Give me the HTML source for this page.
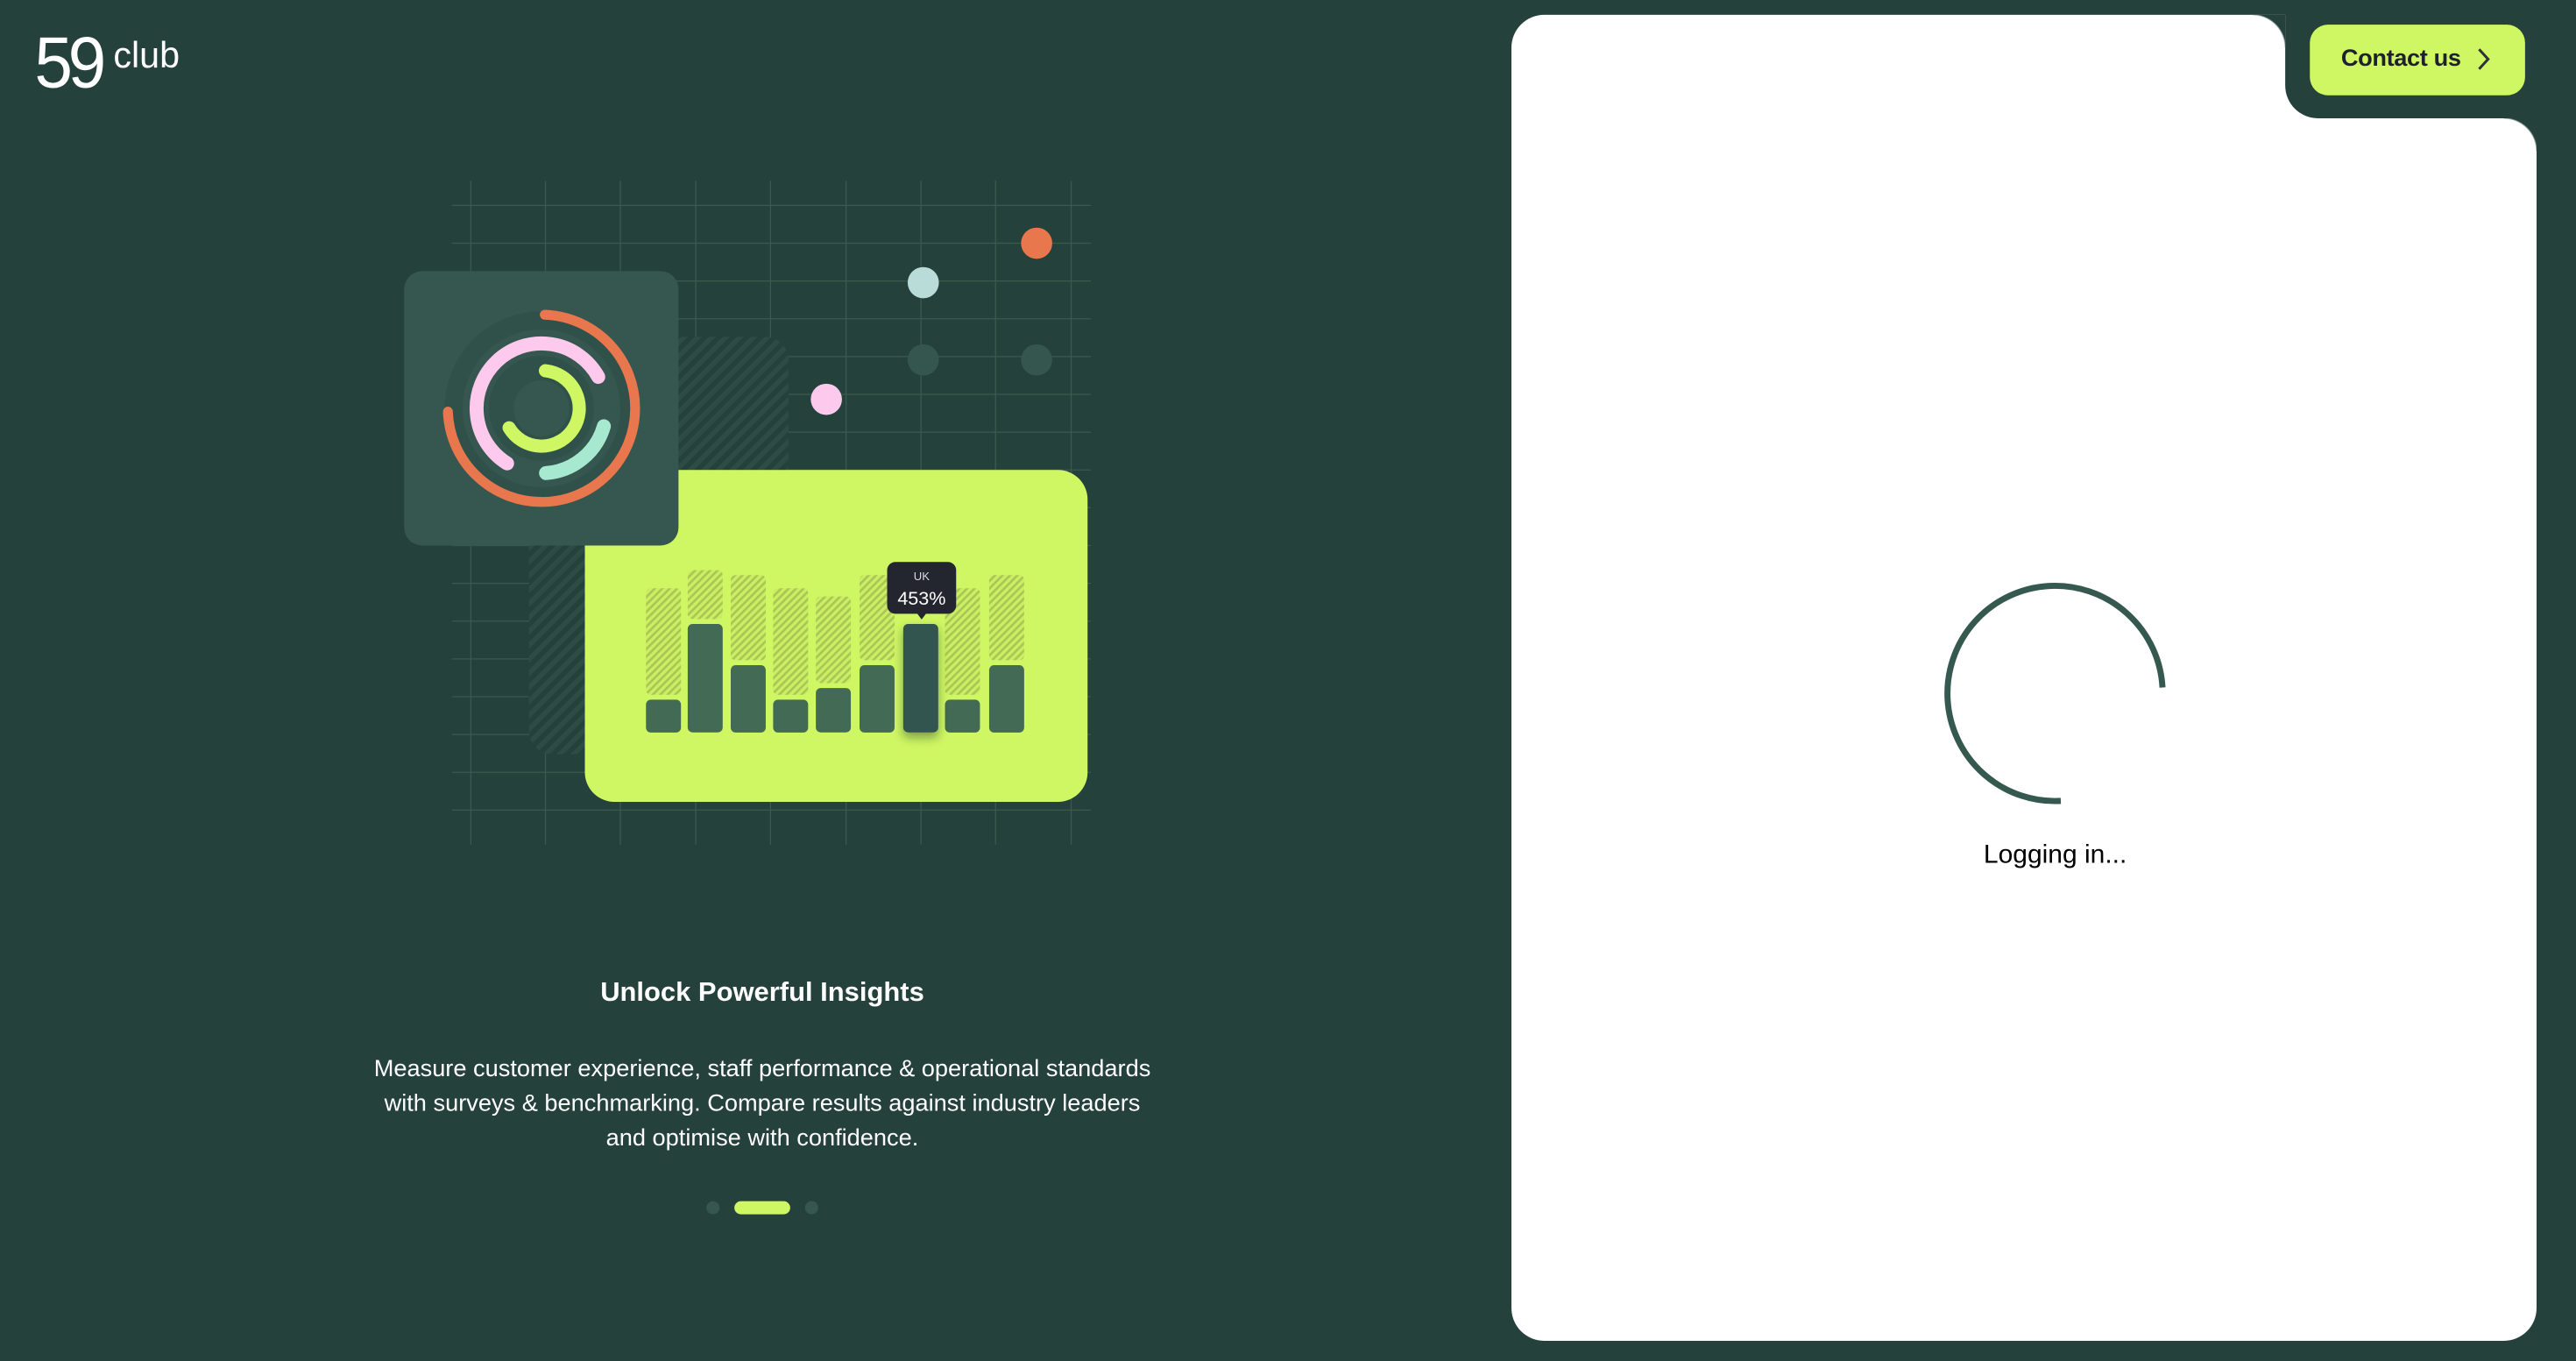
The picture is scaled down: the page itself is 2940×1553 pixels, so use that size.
<!DOCTYPE html>
<html><head><meta charset="utf-8">
<style>
html,body{margin:0;padding:0;width:2940px;height:1552px;overflow:hidden;background:#25413b;}
#s{position:absolute;left:0;top:0;width:1568px;height:828px;transform:scale(1.875);transform-origin:0 0;font-family:"Liberation Sans",sans-serif;}
.a{position:absolute;}
</style></head><body>
<div id="s">
  <!-- logo -->
  <div class="a" style="left:21px;top:17px;color:#fff;font-size:44px;line-height:44px;font-weight:normal;letter-spacing:-3px;transform:scaleX(0.95);transform-origin:0 0;">59</div>
  <div class="a" style="left:69px;top:22px;color:#fff;font-size:22px;line-height:24px;">club</div>

  <!-- illustration -->
  <svg class="a" style="left:0;top:0" width="900" height="560" viewBox="0 0 900 560">
    <defs>
      <pattern id="hd" width="6" height="6" patternUnits="userSpaceOnUse" patternTransform="rotate(45)">
        <rect width="6" height="6" fill="#25413b"/>
        <rect width="3" height="6" fill="#2e4b44"/>
      </pattern>
      <pattern id="hl" width="3.2" height="3.2" patternUnits="userSpaceOnUse" patternTransform="rotate(45)">
        <rect width="3.2" height="3.2" fill="#cbee62"/>
        <rect width="1.4" height="3.2" fill="#a9c656"/>
      </pattern>
      <filter id="sh" x="-50%" y="-50%" width="200%" height="200%"><feDropShadow dx="0" dy="3" stdDeviation="3" flood-color="#1b2f20" flood-opacity="0.45"/></filter>
    </defs>
    <g stroke="#3b5a4e" stroke-width="0.7">
      <line x1="286.6" y1="110" x2="286.6" y2="514"/><line x1="332" y1="110" x2="332" y2="514"/>
      <line x1="377.6" y1="110" x2="377.6" y2="514"/><line x1="423.5" y1="110" x2="423.5" y2="514"/>
      <line x1="469" y1="110" x2="469" y2="514"/><line x1="515" y1="110" x2="515" y2="514"/>
      <line x1="560.6" y1="110" x2="560.6" y2="514"/><line x1="606" y1="110" x2="606" y2="514"/>
      <line x1="652" y1="110" x2="652" y2="514"/>
      <line x1="275" y1="125" x2="664" y2="125"/><line x1="275" y1="148" x2="664" y2="148"/>
      <line x1="275" y1="171" x2="664" y2="171"/><line x1="275" y1="194" x2="664" y2="194"/>
      <line x1="275" y1="217" x2="664" y2="217"/><line x1="275" y1="240" x2="664" y2="240"/>
      <line x1="275" y1="263" x2="664" y2="263"/><line x1="275" y1="286" x2="664" y2="286"/>
      <line x1="275" y1="309" x2="664" y2="309"/><line x1="275" y1="332" x2="664" y2="332"/>
      <line x1="275" y1="355" x2="664" y2="355"/><line x1="275" y1="378" x2="664" y2="378"/>
      <line x1="275" y1="401" x2="664" y2="401"/><line x1="275" y1="424" x2="664" y2="424"/>
      <line x1="275" y1="447" x2="664" y2="447"/><line x1="275" y1="470" x2="664" y2="470"/>
      <line x1="275" y1="493" x2="664" y2="493"/>
    </g>
    <rect x="322" y="205" width="158" height="254" rx="14" fill="url(#hd)"/>
    <circle cx="631" cy="148" r="9.5" fill="#e8774d"/>
    <circle cx="562" cy="172" r="9.5" fill="#b9dcd9"/>
    <circle cx="562" cy="219" r="9.5" fill="#35564e"/>
    <circle cx="631" cy="219" r="9.5" fill="#35564e"/>
    <circle cx="503" cy="243" r="9.5" fill="#fdc9ec"/>
    <!-- lime card -->
    <rect x="356" y="286" width="306" height="202" rx="18" fill="#cff763"/>
    <!-- bars -->
    <g>
      <rect x="393.2" y="358" width="21.3" height="64.8" rx="3" fill="url(#hl)"/>
      <rect x="418.6" y="347" width="21.3" height="29.7" rx="3" fill="url(#hl)"/>
      <rect x="444.8" y="350" width="21.3" height="51.8" rx="3" fill="url(#hl)"/>
      <rect x="470.6" y="358" width="21.3" height="64.8" rx="3" fill="url(#hl)"/>
      <rect x="496.6" y="363" width="21.3" height="52.7" rx="3" fill="url(#hl)"/>
      <rect x="523.2" y="350" width="21.3" height="51.8" rx="3" fill="url(#hl)"/>
      <rect x="575.2" y="358" width="21.3" height="64.8" rx="3" fill="url(#hl)"/>
      <rect x="602.1" y="350" width="21.3" height="51.8" rx="3" fill="url(#hl)"/>
      <g fill="#436a55">
        <rect x="393.2" y="425.8" width="21.3" height="20" rx="3"/>
        <rect x="418.6" y="379.7" width="21.3" height="66" rx="3"/>
        <rect x="444.8" y="404.8" width="21.3" height="41" rx="3"/>
        <rect x="470.6" y="425.8" width="21.3" height="20" rx="3"/>
        <rect x="496.6" y="418.7" width="21.3" height="27" rx="3"/>
        <rect x="523.2" y="404.8" width="21.3" height="41" rx="3"/>
        <rect x="575.2" y="425.8" width="21.3" height="20" rx="3"/>
        <rect x="602.1" y="404.8" width="21.3" height="41" rx="3"/>
      </g>
      <rect x="549.8" y="379.7" width="21.3" height="66" rx="3" fill="#33574f" filter="url(#sh)"/>
    </g>
    <rect x="540" y="342" width="42" height="31.5" rx="5" fill="#23262f"/>
    <path d="M558 373 L561 377 L564 373 Z" fill="#23262f"/>
    <text x="561" y="353" text-anchor="middle" fill="#d8dadd" font-size="7" font-family="Liberation Sans,sans-serif">UK</text>
    <text x="561" y="368" text-anchor="middle" fill="#fff" font-size="11.5" font-family="Liberation Sans,sans-serif">453%</text>
    <!-- ring card -->
    <rect x="246" y="165" width="167" height="167" rx="11" fill="#36574f"/>
    <g transform="translate(329.6,248.5)" fill="none" stroke-linecap="round">
      <circle r="59" fill="#30514a" stroke="none"/>
      <circle r="48" fill="#36574f" stroke="none"/>
      <circle r="32" fill="#30514a" stroke="none"/>
      <circle r="17" fill="#36574f" stroke="none"/>
      <path d="M1.99 -56.97 A57 57 0 1 1 -56.97 1.99" stroke="#e8774d" stroke-width="6"/>
      <path d="M-20.93 33.5 A39.5 39.5 0 1 1 34.55 -19.15" stroke="#fdc9ec" stroke-width="8.5"/>
      <path d="M37.97 10.89 A39.5 39.5 0 0 1 2.76 39.4" stroke="#a7e8d0" stroke-width="8.5"/>
      <path d="M2.4 -22.87 A23 23 0 1 1 -19.72 11.85" stroke="#cff763" stroke-width="8"/>
    </g>
  </svg>

  <div class="a" style="left:164px;top:593px;width:600px;text-align:center;color:#fff;font-size:16.5px;font-weight:bold;line-height:22px;">Unlock Powerful Insights</div>
  <div class="a" style="left:164px;top:641px;width:600px;text-align:center;color:#fff;font-size:14.5px;line-height:21.2px;">Measure customer experience, staff performance &amp; operational standards<br>with surveys &amp; benchmarking. Compare results against industry leaders<br>and optimise with confidence.</div>
  <div class="a" style="left:430px;top:731px;width:8px;height:8px;border-radius:4px;background:#36574f"></div>
  <div class="a" style="left:447px;top:731px;width:34px;height:8px;border-radius:4px;background:#cff763"></div>
  <div class="a" style="left:490px;top:731px;width:8px;height:8px;border-radius:4px;background:#36574f"></div>

  <!-- right panel -->
  <div class="a" style="left:920px;top:9px;width:623.5px;height:807px;background:#fff;border-radius:20px;"></div>
  <div class="a" style="left:1391px;top:0;width:177px;height:72px;background:#25413b;border-bottom-left-radius:20px;"></div>
  <div class="a" style="left:1371px;top:9px;width:20px;height:20px;background:radial-gradient(circle at 0 100%,#fff 19.5px,#25413b 20.5px);"></div>
  <div class="a" style="left:1523.5px;top:72px;width:20px;height:20px;background:radial-gradient(circle at 0 100%,#fff 19.5px,#25413b 20.5px);"></div>
  <div class="a" style="left:1406px;top:15px;width:131px;height:42.6px;background:#cff763;border-radius:11px;"></div>
  <div class="a" style="left:1425px;top:27px;color:#1e2129;font-size:14.5px;font-weight:bold;line-height:18px;letter-spacing:-0.2px;">Contact us</div>
  <svg class="a" style="left:1505px;top:28px" width="14" height="16" viewBox="0 0 14 16"><path d="M4 2 L9.5 8 L4 14" fill="none" stroke="#2f3139" stroke-width="1.6"/></svg>

  <svg class="a" style="left:1170px;top:340px" width="170" height="170" viewBox="1170 340 170 170">
    <path d="M1254.4 487.4 A65.5 65.5 0 1 1 1316.3 418.4" fill="none" stroke="#36594f" stroke-width="3.7"/>
  </svg>
  <div class="a" style="left:1101px;top:511px;width:300px;text-align:center;color:#000;font-size:16px;line-height:20px;">Logging in...</div>
</div>
</body></html>
